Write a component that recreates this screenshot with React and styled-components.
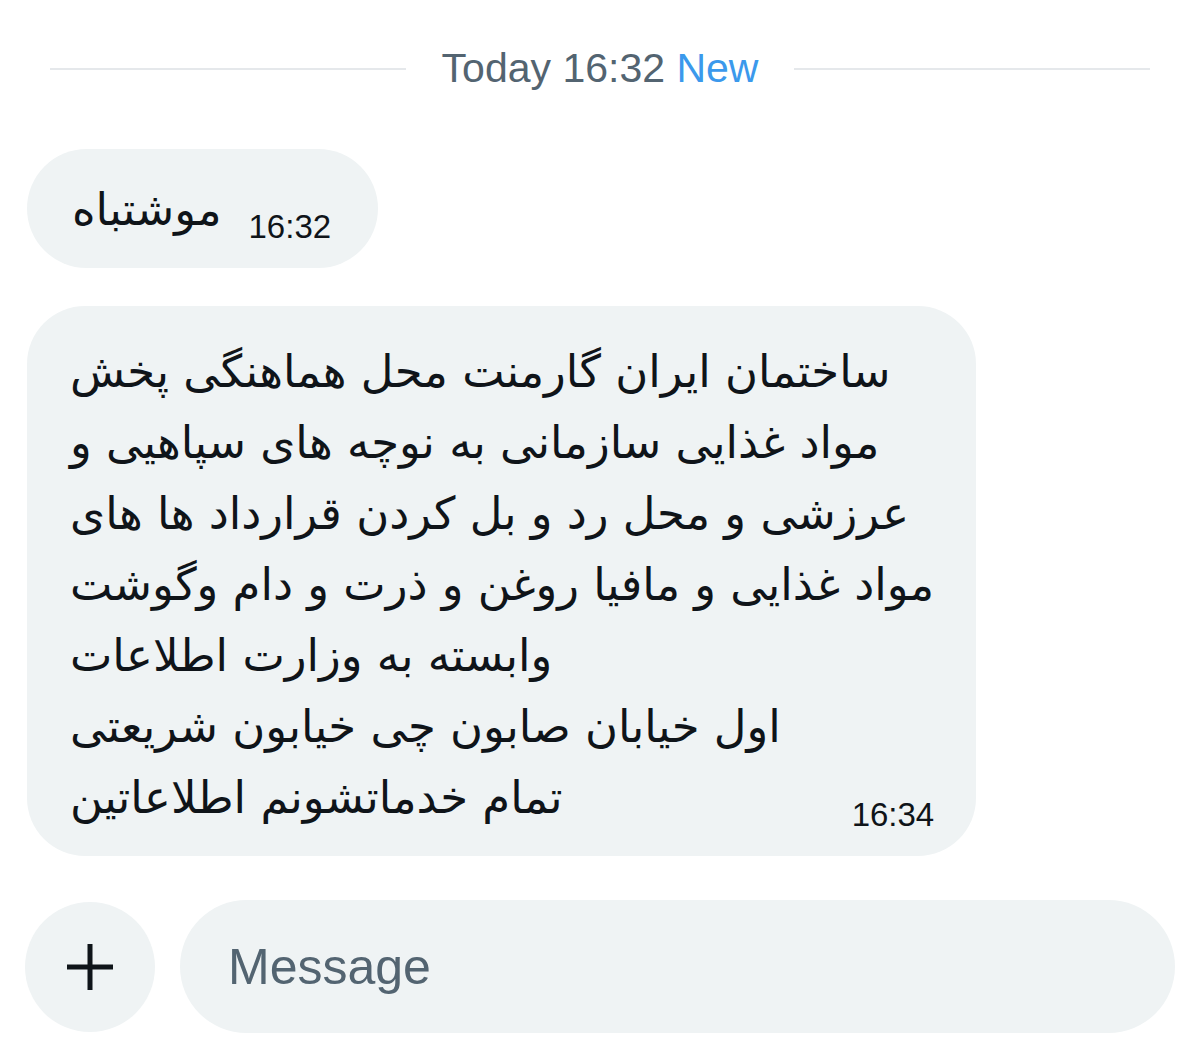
import React from "react";
import styled, { createGlobalStyle } from "styled-components";

const GlobalStyle = createGlobalStyle`
  html, body {
    margin: 0;
    padding: 0;
    background: #ffffff;
  }
  body {
    font-family: "Liberation Sans", Arial, sans-serif;
    color: #0f1419;
  }
`;

const Page = styled.div`
  width: 1200px;
  height: 1058px;
  box-sizing: border-box;
  padding: 48px 25px 0 27px;
  display: flex;
  flex-direction: column;
  overflow: hidden;
`;

const DateDivider = styled.div`
  display: flex;
  align-items: center;
  gap: 36px;
  padding: 0 25px 0 23px;
  font-size: 41px;
  line-height: 41px;
  color: #536471;
  white-space: nowrap;
`;

const Rule = styled.div`
  flex: 1;
  height: 2px;
  background: #e5e8eb;
`;

const NewTag = styled.span`
  color: #3b99ec;
`;

const Thread = styled.div`
  display: flex;
  flex-direction: column;
  align-items: flex-start;
  gap: 38px;
  margin-top: 60px;
`;

const Bubble = styled.div`
  display: flex;
  flex-direction: column;
  align-items: flex-start;
  background: #eff3f4;
  border-radius: ${(p) => (p.$pill ? "60px" : "58px")};
  padding: ${(p) => (p.$pill ? "25px 47px 23px 45px" : "30px 42px 23px 43px")};
`;

const Line = styled.div`
  direction: rtl;
  font-family: "DejaVu Sans", "Noto Sans", sans-serif;
  font-size: 45px;
  line-height: 71px;
  white-space: nowrap;
  color: #0f1419;
`;

const LastRow = styled.div`
  align-self: stretch;
  display: flex;
  align-items: flex-end;
  justify-content: space-between;
  gap: 27px;
`;

const Time = styled.span`
  font-family: "Liberation Sans", Arial, sans-serif;
  font-size: 33px;
  line-height: 37px;
  color: #0f1419;
`;

const Composer = styled.div`
  display: flex;
  align-items: center;
  gap: 25px;
  margin-top: 44px;
  margin-left: -2px;
`;

const AddButton = styled.button`
  flex: none;
  width: 130px;
  height: 130px;
  border: none;
  border-radius: 50%;
  background: #eff3f4;
  display: flex;
  align-items: center;
  justify-content: center;
  padding: 0;
`;

const InputPill = styled.div`
  flex: 1;
  height: 133px;
  border-radius: 67px;
  background: #eff3f4;
  display: flex;
  align-items: center;
  padding-left: 48px;
  font-size: 50px;
  color: #536471;
`;

const lines = [
  "ساختمان ایران گارمنت محل هماهنگی پخش",
  "مواد غذایی سازمانی به نوچه های سپاهیی و",
  "عرزشی و محل رد و بل کردن قرارداد ها های",
  "مواد غذایی و مافیا روغن و ذرت و دام وگوشت",
  "وابسته به وزارت اطلاعات",
  "اول خیابان صابون چی خیابون شریعتی",
];

const PlusIcon = () => (
  <svg width="50" height="50" viewBox="0 0 50 50">
    <path d="M25 2v46M2 25h46" stroke="#0f1419" strokeWidth="5" />
  </svg>
);

export default function App() {
  return (
    <>
      <GlobalStyle />
      <Page>
        <DateDivider>
          <Rule />
          <span>
            Today 16:32 <NewTag>New</NewTag>
          </span>
          <Rule />
        </DateDivider>

        <Thread>
          <Bubble $pill>
            <LastRow>
              <Line>موشتباه</Line>
              <Time>16:32</Time>
            </LastRow>
          </Bubble>

          <Bubble>
            {lines.map((l) => (
              <Line key={l}>{l}</Line>
            ))}
            <LastRow>
              <Line>تمام خدماتشونم اطلاعاتین</Line>
              <Time>16:34</Time>
            </LastRow>
          </Bubble>
        </Thread>

        <Composer>
          <AddButton aria-label="Add">
            <PlusIcon />
          </AddButton>
          <InputPill>Message</InputPill>
        </Composer>
      </Page>
    </>
  );
}
